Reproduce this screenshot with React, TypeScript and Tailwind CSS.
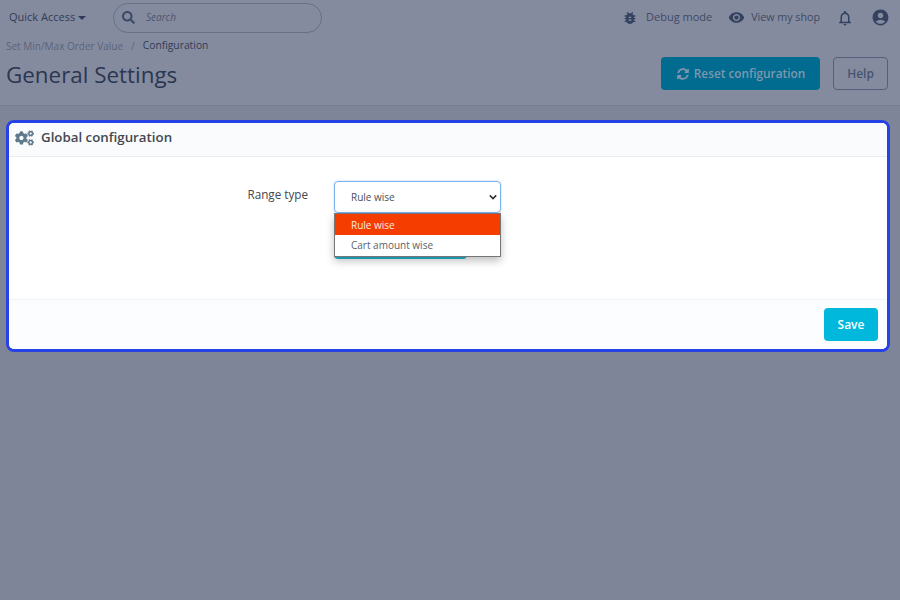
import { FaCogs, FaSearch, FaSyncAlt } from "react-icons/fa";
import { MdAccountCircle, MdBugReport, MdNotificationsNone, MdVisibility } from "react-icons/md";

export default function App() {
  return (
    <div className="h-[600px] w-[900px] overflow-hidden bg-[#7f8599] font-['Open_Sans',sans-serif] text-[#363a41]">
      {/* Top bar + page head, dimmed by the modal backdrop */}
      <header className="h-[106px] border-b border-[#777d91] bg-[#858b9f]">
        <div className="flex h-[35px] items-center pl-[9px] pr-[10px]">
          <div className="flex w-[104px] items-center text-[11px] text-[#2f3c58]">
            Quick Access
            <span className="ml-[3px] mt-[1px] h-0 w-0 border-x-[4px] border-t-[4px] border-x-transparent border-t-[#2f3c58]" />
          </div>
          <div className="flex h-[30px] w-[209px] items-center rounded-full border border-[#657088] pl-[8px]">
            <FaSearch className="h-[13px] w-[13px] text-[#3d4a66]" />
            <span className="ml-[11px] text-[10px] italic text-[#4d566f]">Search</span>
          </div>
          <div className="ml-auto flex items-center text-[11px] text-[#3d4a66]">
            <MdBugReport className="h-[16px] w-[16px] text-[#33425f]" />
            <span className="ml-[8px]">Debug mode</span>
            <MdVisibility className="ml-[16px] h-[17px] w-[17px] text-[#33425f]" />
            <span className="ml-[6px] text-[10.7px]">View my shop</span>
            <MdNotificationsNone className="ml-[16px] h-[18px] w-[18px] text-[#33425f]" />
            <MdAccountCircle className="ml-[17px] h-[19px] w-[19px] text-[#33425f]" />
          </div>
        </div>
        <div className="flex items-start justify-between pl-[6px] pr-[12px]">
          <div>
            <div className="mt-[3px] flex h-[16px] items-center text-[10px] text-[#5b6379]">
              Set Min/Max Order Value
              <span className="mx-[8px] text-[#5b6379]">/</span>
              <span className="text-[10.3px] text-[#2f3c58]">Configuration</span>
            </div>
            <h1 className="mt-[3px] text-[22.4px] leading-[36px] text-[#2b3650]">General Settings</h1>
          </div>
          <div className="mt-[22px] flex gap-[13px]">
            <div className="flex h-[33px] w-[159px] items-center justify-center rounded-[4px] bg-[#016b90] pl-[1px] text-[11.8px] font-semibold text-[#7f97ad]">
              <FaSyncAlt className="mr-[5px] h-[12px] w-[12px]" />
              Reset configuration
            </div>
            <div className="flex h-[33px] w-[55px] items-center justify-center rounded-[4px] border border-[#54607a] text-[12px] font-semibold text-[#47536e]">
              Help
            </div>
          </div>
        </div>
      </header>

      {/* Card */}
      <section className="ml-[6px] mt-[14px] h-[232px] w-[884px] overflow-hidden rounded-[8px] border-[3px] border-[#2442e6] bg-white">
        <div className="flex h-[34px] items-center border-b border-[#e9edf2] bg-[#fafbfc] pb-[3px] pl-[6px]">
          <FaCogs className="h-[18px] w-[19px] text-[#5f7a8a]" />
          <h2 className="ml-[7px] text-[13.3px] font-semibold text-[#43474f]">Global configuration</h2>
        </div>
        <div className="flex h-[143px] border-b border-[#f0f2f5] pt-[24px]">
          <label className="mt-[5px] w-[299px] text-right text-[11.7px] text-[#43474f]">Range type</label>
          <div className="relative ml-[26px] w-[167px]">
            <div className="flex h-[32px] items-center justify-between rounded-[4px] border border-[#7cb2ef] pl-[16px] pr-[3px] text-[10px] text-[#495057] shadow-[0_0_2px_rgba(124,178,239,0.7)]">
              Rule wise
              <svg viewBox="0 0 10 10" className="h-[8px] w-[8px]" fill="none" stroke="#333" strokeWidth="2">
                <path d="M1 3l4 4 4-4" />
              </svg>
            </div>
            <div className="mt-[14px] h-[32px] w-[133px] rounded-[4px] bg-[#25b9d7]" />
            {/* Open select list */}
            <ul className="absolute left-0 top-[32px] w-full border border-[#767676] bg-white text-[10px] text-[#5c6167] shadow-[0_4px_8px_rgba(0,0,0,0.25)]">
              <li className="flex h-[21px] items-center bg-[#f53d00] pl-[16px] pt-[1px] text-[#fde9e2]">Rule wise</li>
              <li className="flex h-[21px] items-center pl-[16px]">Cart amount wise</li>
            </ul>
          </div>
        </div>
        <div className="flex h-[52px] items-start justify-end bg-[#fcfdfe] pr-[9px] pt-[8px]">
          <div className="flex h-[33px] w-[54px] items-center justify-center rounded-[4px] bg-[#00b8dc] text-[12px] font-semibold text-white">
            Save
          </div>
        </div>
      </section>
    </div>
  );
}
